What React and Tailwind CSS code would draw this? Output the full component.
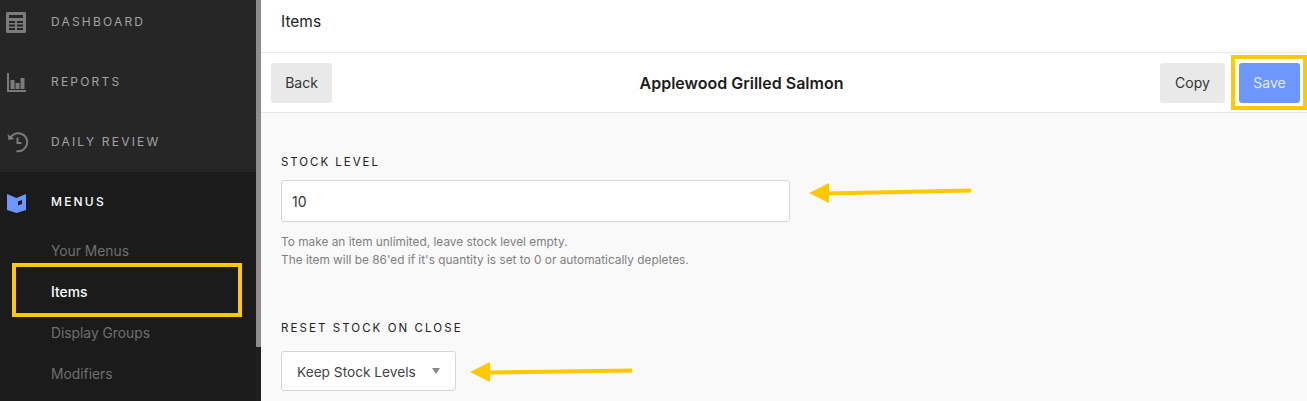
import React from "react";

const navLabel = "text-[12px] tracking-[2.2px]";

function NavRow({ icon, label, active }) {
  return (
    <div className="h-[60px] flex items-center">
      <div className="w-[51px] pl-[6px] shrink-0">{icon}</div>
      <span className={`${navLabel} ${active ? "text-white font-medium" : "text-[#a3a3a3]"}`}>{label}</span>
    </div>
  );
}

function TableIcon() {
  return (
    <svg width="20" height="21" viewBox="0 0 20 21">
      <rect width="20" height="21" rx="1.5" fill="#7b7b7b" />
      <rect x="3" y="3" width="14" height="3" fill="#262626" />
      <path d="M3 9h6v2H3zM11 9h6v2h-6zM3 12.5h6v2H3zM11 12.5h6v2h-6zM3 16h6v2H3zM11 16h6v2h-6z" fill="#262626" />
    </svg>
  );
}

function ChartIcon() {
  return (
    <svg width="19" height="19" viewBox="0 0 19 19" className="ml-[1px]">
      <path d="M0 0h2v17h17v2H0z" fill="#7b7b7b" />
      <path d="M3.5 7h4v9h-4zM8.5 10h4v6h-4zM13.5 5h4v11h-4z" fill="#7b7b7b" />
    </svg>
  );
}

function HistoryIcon() {
  return (
    <svg width="21" height="22" viewBox="0 0 21 22" fill="none" stroke="#7b7b7b" strokeWidth="2" className="ml-[1px]">
      <path d="M3 7.5 A9 9 0 1 1 9.5 20" />
      <path d="M0.5 3 L1.5 9 L7.5 8 Z" fill="#7b7b7b" stroke="none" />
      <path d="M10.5 6.5v5.5h4" />
    </svg>
  );
}

function MenuIcon() {
  return (
    <svg width="19" height="19" viewBox="0 0 19 19" className="ml-[1px] mt-[2px]">
      <path d="M0 0 L9.5 4 L19 0 V16 L9.5 19 L0 16 Z" fill="#6d97ff" />
      <path d="M11 7.5 L15 6 V10 L11 11.5 Z" fill="#1b1b1b" />
    </svg>
  );
}

function Arrow({ className, width, rise }) {
  // yellow hand-drawn arrow pointing left
  return (
    <svg width={width} height="20" viewBox={`0 0 ${width} 20`} className={className}>
      <path d={`M0 10 L20 0 V20 Z`} fill="#ffc800" />
      <path d={`M18 10.5 L${width} ${10.5 - rise}`} stroke="#ffc800" strokeWidth="4" fill="none" />
    </svg>
  );
}

export default function App() {
  return (
    <div className="relative h-[401px] w-[1307px] overflow-hidden flex bg-[#f9f9f9] text-[#222] font-['Inter','Liberation_Sans',sans-serif]">
      <aside className="w-[256px] shrink-0 bg-[#262626] -mt-[8px] h-[409px]">
        <NavRow icon={<TableIcon />} label="DASHBOARD" />
        <NavRow icon={<ChartIcon />} label="REPORTS" />
        <NavRow icon={<HistoryIcon />} label="DAILY REVIEW" />
        <div className="bg-[#1b1b1b] h-[240px]">
          <NavRow icon={<MenuIcon />} label="MENUS" active />
          <div className="flex flex-col pl-[51px] -mt-[1px] text-[13.8px] text-[#6f6f6f]">
            <span className="h-[41px] leading-[41px]">Your Menus</span>
            <span className="h-[41px] leading-[41px] text-white font-medium">Items</span>
            <span className="h-[41px] leading-[41px]">Display Groups</span>
            <span className="h-[41px] leading-[41px]">Modifiers</span>
          </div>
        </div>
      </aside>

      <div className="w-[5px] shrink-0 bg-[#1f1f1f]">
        <div className="h-[347px] bg-[#8b8e90]" />
      </div>

      <main className="flex-1 min-w-0">
        <header className="h-[52px] bg-white flex items-center pl-[20px] text-[15.5px] pb-[9px] shadow-[0_1px_1px_rgba(0,0,0,0.06)] relative">
          Items
        </header>
        <div className="h-[60px] mt-[1px] bg-white border-b border-[#e6e6e6] flex items-center justify-between pl-[10px] pr-[7px]">
          <button className="w-[61px] h-[40px] rounded-[3px] bg-[#e9e9e9] text-[14px] text-[#333]">Back</button>
          <h1 className="text-[16px] font-semibold text-[#1d1d1d] absolute left-[261px] w-[961px] text-center pointer-events-none">Applewood Grilled Salmon</h1>
          <div className="flex gap-[14px]">
            <button className="w-[65px] h-[40px] rounded-[3px] bg-[#e9e9e9] text-[14px] text-[#333]">Copy</button>
            <button className="w-[61px] h-[40px] rounded-[3px] bg-[#6d97ff] text-[14px] text-[#e3ebff]">Save</button>
          </div>
        </div>

        <section className="pl-[20px] pt-[41px]">
          <label className="block text-[11.5px] tracking-[0.17em] leading-[16px] text-[#222]">STOCK LEVEL</label>
          <div className="mt-[10px] w-[509px] h-[42px] rounded-[3px] border border-[#d6d6d6] bg-white flex items-center pl-[10px] text-[14px] text-[#333]">10</div>
          <p className="mt-[11px] text-[11.85px] leading-[18px] text-[#808080]">
            To make an item unlimited, leave stock level empty.
            <br />
            The item will be 86'ed if it's quantity is set to 0 or automatically depletes.
          </p>
          <label className="block mt-[51px] text-[11.5px] tracking-[0.18em] leading-[16px] text-[#222]">RESET STOCK ON CLOSE</label>
          <div className="mt-[15px] w-[175px] h-[40px] rounded-[3px] border border-[#d6d6d6] bg-white flex items-center justify-between pl-[15px] pr-[15px] pt-[3px] text-[13.7px] text-[#444]">
            Keep Stock Levels
            <span className="w-0 h-0 border-x-[4.5px] border-x-transparent border-t-[6px] border-t-[#888] -mt-[3px]" />
          </div>
        </section>
      </main>

      {/* annotations */}
      <div className="absolute left-[12px] top-[263px] w-[230px] h-[54px] border-[4px] border-[#ffc800]" />
      <div className="absolute left-[1231px] top-[55px] w-[76px] h-[55px] border-[4px] border-[#ffc800]" />
      <Arrow className="absolute left-[809px] top-[183px]" width={162} rise={3} />
      <Arrow className="absolute left-[470px] top-[362px]" width={162} rise={2} />
    </div>
  );
}
